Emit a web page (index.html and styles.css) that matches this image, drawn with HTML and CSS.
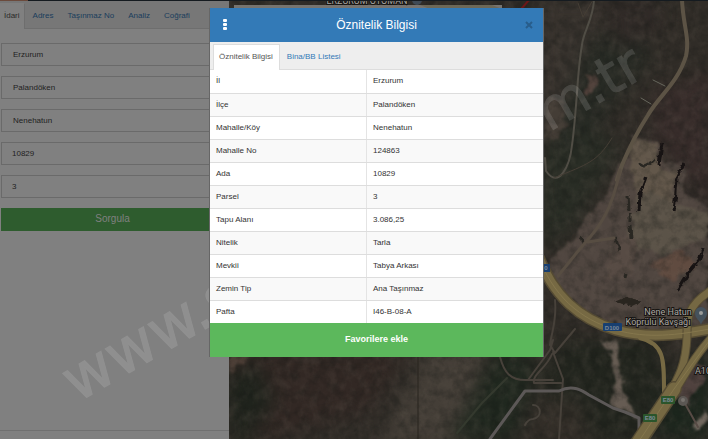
FILE: index.html
```html
<!DOCTYPE html>
<html lang="tr">
<head>
<meta charset="utf-8">
<title>Öznitelik Bilgisi</title>
<link rel="stylesheet" href="styles.css">
</head>
<body>
<svg class="map" viewBox="0 0 708 439" preserveAspectRatio="xMinYMin slice" aria-hidden="true">
  <defs>
    <filter id="soft" x="-20%" y="-20%" width="140%" height="140%" color-interpolation-filters="sRGB"><feGaussianBlur stdDeviation="9"/></filter>
    <filter id="rough" x="-10%" y="-10%" width="120%" height="120%" color-interpolation-filters="sRGB">
      <feTurbulence type="fractalNoise" baseFrequency="0.09" numOctaves="3" seed="4" result="n"/>
      <feDisplacementMap in="SourceGraphic" in2="n" scale="14" xChannelSelector="R" yChannelSelector="G"/>
      <feGaussianBlur stdDeviation="1"/>
    </filter>
    <filter id="detail" x="-10%" y="-10%" width="120%" height="120%" color-interpolation-filters="sRGB">
      <feTurbulence type="fractalNoise" baseFrequency="0.2" numOctaves="2" seed="4" result="n"/>
      <feDisplacementMap in="SourceGraphic" in2="n" scale="5" xChannelSelector="R" yChannelSelector="G"/>
    </filter>
    <filter id="grain" x="0" y="0" width="100%" height="100%" color-interpolation-filters="sRGB">
      <feTurbulence type="fractalNoise" baseFrequency="0.11 0.09" numOctaves="4" seed="8"/>
      <feColorMatrix values="0 0 0 0 0.42  0 0 0 0 0.38  0 0 0 0 0.34  1.6 0 0 0 -0.6"/>
    </filter>
    <filter id="shade" x="0" y="0" width="100%" height="100%" color-interpolation-filters="sRGB">
      <feTurbulence type="fractalNoise" baseFrequency="0.1" numOctaves="4" seed="21"/>
      <feColorMatrix values="0 0 0 0 0.07  0 0 0 0 0.08  0 0 0 0 0.07  0 2 0 0 -0.8"/>
    </filter>
  </defs>
  <rect width="708" height="439" fill="#302c27"/>
  <g filter="url(#soft)">
    <path d="M540 0h65l-30 120-35 40z" fill="#37322d"/>
    <path d="M590 40l50-20 10 40-40 50-40 60-30 30v-40z" fill="#272a24"/>
    <path d="M540 150l60-20 20 20-50 80-30 20z" fill="#292d25"/>
    <path d="M655 90l60-20v140l-30-30-35-50z" fill="#372c2a"/>
    <path d="M600 0h60v30l-40 20z" fill="#302a27"/>
    <path d="M229 350h180l-40 60-140 40z" fill="#322824"/>
    <path d="M225 380l30-20 20 40-40 60z" fill="#20241d"/>
    <path d="M425 350h60l-20 95h-85z" fill="#443e37"/>
    <path d="M495 350l45 10-25 80h-65z" fill="#20281f"/>
    <path d="M560 340l100 0 10 60-20 40h-80l-30-50z" fill="#22251e"/>
    <path d="M660 400l30-40 20-10v90h-50z" fill="#1c261d"/>
    <path d="M540 400h40l10 45h-60z" fill="#332e28"/>
  </g>
  <path d="M632 134 L660 141 L664 164 L684 162 L682 190 L708 205 V330 L650 332 L592 318 L545 280 L556 255 L585 225 L608 190 L624 160 Z" fill="#504640" filter="url(#rough)"/>
  <g filter="url(#rough)">
    <path d="M632 136l26 8 2 24 18 6-6 30-30 8-9-40-6-12z" fill="#62574a"/>
    <path d="M640 190l40 15 28 10v20l-40 20-40-10z" fill="#5b5348"/>
    <path d="M650 262l34-10 10 14-24 16z" fill="#604b40"/>
    <path d="M612 240l28 0-10 36-25 6z" fill="#574b44"/>
    <path d="M229 352h22l-22 22z" fill="#493b33"/>
    <path d="M602 337l14 3 5 30 2 25 18 24-28-14-3-11 5-12-4-26z" fill="#665c53"/>
    <path d="M680 376l18-16 10 10-20 34-12-6z" fill="#4e403d"/>
    <path d="M695 432l13-12v-12l-16 20z" fill="#71685f"/>
    <path d="M586 72l10 4-4 14-6 4z" fill="#51413b"/>
    <path d="M549 94l14 10 3 22-10 12-12 2z" fill="#443d36"/>
  </g>
  <rect width="708" height="439" filter="url(#grain)" opacity=".25"/>
  <rect width="708" height="439" filter="url(#shade)" opacity=".35"/>
  <g filter="url(#detail)" stroke="#171313" fill="none" stroke-width="3">
    <path d="M662 143l-3 22"/>
    <path d="M646 177l-6 16-1 18M684 163l-7 14-1 15-2 19" stroke-width="3"/>
    <path d="M628 195l1 15M630 212l0 10M630 226l1 12M615 237l5 13M626 273l-1 5M581 238l2 6M656 160l-12 6 -5 -3" stroke="#292722"/>
    <path d="M703 247l-3 12-11 13-11 18" stroke-width="3"/>
    <path d="M614 302l12-5 16 4-10 5z" fill="#29251f" stroke="none"/>
  </g>
  <g fill="none" stroke-linecap="round" stroke-linejoin="round">
    <path d="M594 0C593 20 583 32 582 45C577 72 577 110 572 145C570 165 559 190 546 171L545 158" stroke="#504d45" stroke-width="2"/>
    <path d="M578 3l5 14 10-17M612 138c-15 24-24 26-58 40" stroke="#453e35" stroke-width="1"/>
    <path d="M682 0C683 25 690 38 686 56C678 83 658 97 648 115C639 129 630 146 622 165L617 180" stroke="#5c5345" stroke-width="4"/>
    <path d="M620 170C612 210 600 227 583 245L558 276M588 242l26-4" stroke="#574d42" stroke-width="3"/>
    <path d="M653 80l12 6M641 98l10 6" stroke="#66665c" stroke-width="1"/>
    <path d="M500 357c4 15 10 24 28 23h25M528 380l22-30 3-10M555 300c2 20-3 30-5 45l5 8 20-24M553 352l10 27-4 60M552 354c-6 15-20 20-18 29h27" stroke="#47413a" stroke-width="2"/>
    <path d="M490 439l35-48h34c14-7 24 0 30 4l24 13 12 4 14 6v21" stroke="#5c5857" stroke-width="3"/>
    <path d="M533 405c8 0 10 12 0 14-5 0-8 6-8 6" stroke="#47423b" stroke-width="2"/>
    <path d="M507 378l-25 25-25 30" stroke="#34392e" stroke-width="2"/>
    <path d="M418 350v90" stroke="#28251f" stroke-width="1"/>
    <path d="M537 253C553 297 580 319 616 330C648 339 677 335 710 329" stroke="#554b33" stroke-width="12"/>
    <path d="M537 253C553 297 580 319 616 330C648 339 677 335 710 329" stroke="#766943" stroke-width="9"/>
    <path d="M710 291C686 307 687 319 687 336C686 365 679 377 666 400" stroke="#554b33" stroke-width="9"/>
    <path d="M710 291C686 307 687 319 687 336C686 365 679 377 666 400" stroke="#756843" stroke-width="7"/>
    <path d="M640 338C665 344 664 360 664 394" stroke="#766943" stroke-width="4"/>
    <path d="M674 389L638 443" stroke="#554b33" stroke-width="16"/>
    <path d="M712 337C696 355 690 366 676 389" stroke="#554b33" stroke-width="9"/>
    <path d="M712 337C696 355 690 366 676 389" stroke="#766943" stroke-width="7"/>
    <path d="M674 389L639 441" stroke="#766943" stroke-width="13"/>
    <path d="M537 253C553 297 580 319 616 330C648 339 677 335 710 329M712 337L674 389L639 441" stroke="#85774d" stroke-width="1"/>
    <path d="M683 400l15 27" stroke="#574b45" stroke-width="2"/>
    <path d="M522 8l7-8" stroke="#6b1719" stroke-width="2"/>
  </g>
  <path d="M234 5h268v6H234z" fill="#77746f"/>
  <path d="M420 5h72l10 4h-72z" fill="#6d6857"/>
  <circle cx="417" cy="0" r="5" fill="#3f4a55"/>
  <g class="route">
    <rect x="542" y="264" width="8" height="8" fill="#183f70"/>
    <rect x="603" y="323" width="19" height="8" rx="1" fill="#183f70"/>
    <rect x="661" y="396" width="14" height="8" rx="1" fill="#2b552b"/>
    <rect x="643" y="414" width="14" height="8" rx="1" fill="#2b552b"/>
    <text x="546" y="270">0</text><text x="612" y="330">D100</text><text x="668" y="402">E80</text><text x="650" y="420">E80</text>
  </g>
  <g class="place">
    <text x="668" y="315">Nene Hatun</text>
    <text x="658" y="325">Köprülü Kavşağı</text>
    <text x="703" y="374">A10</text>
    <text x="367" y="4">ERZURUM OTOMAN</text>
  </g>
  <path d="M701 325c-1-5-6-6-6-12a6 6 0 0 1 12 0c0 6-5 7-6 12z" fill="#45525c"/>
  <circle cx="701" cy="313" r="2" fill="#9b9d9b"/>
  <circle cx="683" cy="401" r="5" fill="#5b5753"/><circle cx="683" cy="400" r="2" fill="#77736e"/>
  <path d="M0 0h708v1H0z" fill="#151b20"/>
  <path d="M0 0h28v1H0z" fill="#6b4a3c"/>
</svg>

<aside class="panel">
  <nav class="tabs panel-tabs">
    <a href="#idari" class="active">İdari</a><a href="#adres">Adres</a><a href="#tasinmaz">Taşınmaz No</a><a href="#analiz">Analiz</a><a href="#cografi">Coğrafi</a>
  </nav>
  <form class="query">
    <select aria-label="İl"><option>Erzurum</option></select>
    <select aria-label="İlçe"><option>Palandöken</option></select>
    <select aria-label="Mahalle"><option>Nenehatun</option></select>
    <input aria-label="Ada" value="10829">
    <input aria-label="Parsel" value="3">
    <button type="button">Sorgula</button>
  </form>
  <div class="panel-foot"></div>
</aside>

<svg class="map watermark" viewBox="0 0 708 439" preserveAspectRatio="xMinYMin slice" aria-hidden="true">
  <text transform="translate(77 403) rotate(-30)">www.s</text>
  <text class="domain" transform="translate(549 132) rotate(-30)">m.tr</text>
</svg>

<section class="modal" role="dialog" aria-labelledby="title">
  <header>
    <button type="button" class="icon" aria-label="Menü"><svg viewBox="0 0 6 12" width="6" height="12"><g fill="#fff"><rect x="1" y="0" width="4" height="3" rx="1"/><rect x="1" y="4" width="4" height="3" rx="1"/><rect x="1" y="8" width="4" height="3" rx="1"/></g></svg></button>
    <h1 id="title">Öznitelik Bilgisi</h1>
    <button type="button" class="icon" aria-label="Kapat"><svg viewBox="0 0 8 8" width="8" height="8"><path d="M1 1l6 6M7 1L1 7" stroke="#285d8b" stroke-width="2"/></svg></button>
  </header>
  <nav class="tabs modal-tabs"><a href="#oznitelik" class="active">Öznitelik Bilgisi</a><a href="#bina">Bina/BB Listesi</a></nav>
  <table>
    <tr><th scope="row">İl</th><td>Erzurum</td></tr>
    <tr><th scope="row">İlçe</th><td>Palandöken</td></tr>
    <tr><th scope="row">Mahalle/Köy</th><td>Nenehatun</td></tr>
    <tr><th scope="row">Mahalle No</th><td>124863</td></tr>
    <tr><th scope="row">Ada</th><td>10829</td></tr>
    <tr><th scope="row">Parsel</th><td>3</td></tr>
    <tr><th scope="row">Tapu Alanı</th><td>3.086,25</td></tr>
    <tr><th scope="row">Nitelik</th><td>Tarla</td></tr>
    <tr><th scope="row">Mevkii</th><td>Tabya Arkası</td></tr>
    <tr><th scope="row">Zemin Tip</th><td>Ana Taşınmaz</td></tr>
    <tr><th scope="row">Pafta</th><td>I46-B-08-A</td></tr>
  </table>
  <button type="button" class="favorite">Favorilere ekle</button>
</section>
</body>
</html>
```
FILE: styles.css
```css
* { box-sizing: border-box; }

body {
  margin: 0;
  min-height: 100vh;
  display: flex;
  overflow: hidden;
  position: relative;
  background: #2f2c28;
  color: #333;
  font: 8px/12px "Liberation Sans", Arial, sans-serif;
}

button, input, select { font: inherit; color: inherit; margin: 0; border-radius: 0; }
a { color: #337ab7; text-decoration: none; }

.map { position: absolute; inset: 0; width: 100%; height: 100%; }
.route text { font: bold 6px "Liberation Sans", sans-serif; fill: #7d8a98; text-anchor: middle; }
.place text {
  font: 9px Roboto, sans-serif;
  fill: #a9a6a1;
  text-anchor: middle;
  stroke: #171513;
  stroke-width: 2px;
  paint-order: stroke;
}
.watermark { pointer-events: none; }
.watermark text {
  font: 60px "DejaVu Sans", sans-serif;
  fill: #fff;
  stroke: #fff;
  stroke-width: 1px;
  opacity: .12;
}
.watermark .domain { font-size: 54px; }

.panel {
  position: relative;
  display: flex;
  flex-direction: column;
  width: 229px;
  margin-top: 1px;
  background: #808080;
  color: #222;
}
.tabs { display: flex; }
.tabs a { border: 1px solid transparent; border-bottom: 0; white-space: nowrap; }
.panel-tabs { height: 28px; background: #777; border-bottom: 1px solid #6e6e6e; padding-top: 2px; }
.panel-tabs a { padding: 6px 6px; color: #1a3d5c; height: 26px; }
.panel-tabs a.active { color: #2a2a2a; background: #808080; border-right-color: #6e6e6e; padding: 6px 4px 6px 3px; margin-right: 1px; }

.query { display: grid; gap: 10px; padding: 14px 3px 0 1px; }
.query input, .query select {
  appearance: none;
  width: 100%;
  height: 23px;
  padding: 0 10px;
  background: transparent;
  border: 1px solid #6a6a6a;
  outline: 0;
}
.query select { padding-left: 11px; }
.query button { height: 23px; padding: 0 2px 2px 0; border: 0; background: #2e5c2e; color: #808080; font-size: 10px; }
.panel-foot { margin-top: auto; height: 9px; border-top: 1px solid #707070; }

.modal {
  position: absolute;
  top: 8px;
  left: 209px;
  width: calc(100% - 373px);
  border: 1px solid #666;
  border-width: 0 1px;
  background: #fff;
}
.modal header {
  display: flex;
  align-items: center;
  justify-content: space-between;
  height: 34px;
  padding: 0 10px 0 12px;
  background: #337ab7;
  color: #fff;
}
.modal h1 { margin: 0; font-size: 12px; font-weight: 400; line-height: 16px; }
.icon { display: flex; padding: 0; border: 0; background: none; }
.modal-tabs { height: 28px; padding: 2px 3px 0; background: #eee; border-bottom: 1px solid #ddd; }
.modal-tabs a { padding: 6px; height: 26px; }
.modal-tabs a.active { padding-left: 5px; background: #fff; color: #555; border-color: #ddd; }

table { width: 100%; border-collapse: collapse; table-layout: fixed; }
tr { height: 23px; }
tr:nth-child(even) { background: #f9f9f9; }
th, td { padding: 0 6px; text-align: left; font-weight: 400; border-bottom: 1px solid #ddd; }
th { width: 47%; border-right: 1px solid #e4e4e4; }
tr:last-child > * { border-bottom: 0; }

.favorite {
  display: block;
  width: 100%;
  height: 34px;
  padding: 0 0 3px;
  border: 0;
  background: #5cb85c;
  color: #fff;
  font-size: 9px;
  font-weight: 700;
}
```
